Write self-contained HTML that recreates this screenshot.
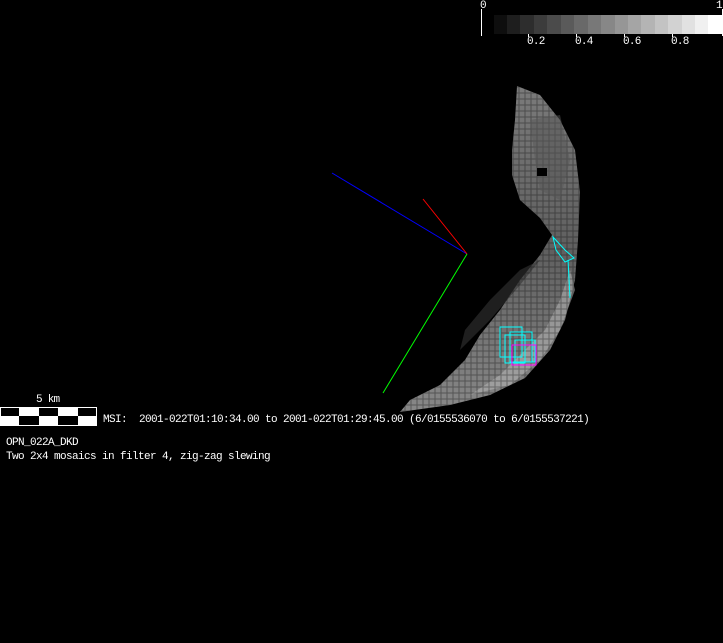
<!DOCTYPE html>
<html><head><style>
html,body{margin:0;padding:0;background:#000;width:723px;height:643px;overflow:hidden;position:relative}
.t{position:absolute;color:#fff;font-family:"Liberation Mono",monospace;font-size:11px;line-height:11px;white-space:pre;letter-spacing:-0.75px}
</style></head><body>
<svg width="723" height="643" style="position:absolute;left:0;top:0">
<defs>
<linearGradient id="g2" x1="0" y1="0" x2="0" y2="1">
<stop offset="0" stop-color="#999"/><stop offset="0.5" stop-color="#777"/><stop offset="1" stop-color="#aaa"/>
</linearGradient>
<pattern id="p" width="6" height="6" patternUnits="userSpaceOnUse">
<rect width="6" height="6" fill="none"/><path d="M0,3 L6,3 M3,0 L3,6" stroke="#000" stroke-width="1" opacity="0.35"/>
</pattern>
</defs>
<g shape-rendering="crispEdges">
<rect x="494" y="15" width="14" height="19" fill="#0e0e0e"/>
<rect x="507" y="15" width="14" height="19" fill="#1e1e1e"/>
<rect x="520" y="15" width="14" height="19" fill="#2d2d2d"/>
<rect x="534" y="15" width="14" height="19" fill="#3c3c3c"/>
<rect x="547" y="15" width="14" height="19" fill="#4b4b4b"/>
<rect x="561" y="15" width="14" height="19" fill="#5a5a5a"/>
<rect x="574" y="15" width="14" height="19" fill="#696969"/>
<rect x="588" y="15" width="14" height="19" fill="#787878"/>
<rect x="601" y="15" width="14" height="19" fill="#878787"/>
<rect x="615" y="15" width="14" height="19" fill="#969696"/>
<rect x="628" y="15" width="14" height="19" fill="#a5a5a5"/>
<rect x="641" y="15" width="14" height="19" fill="#b4b4b4"/>
<rect x="655" y="15" width="14" height="19" fill="#c3c3c3"/>
<rect x="668" y="15" width="14" height="19" fill="#d2d2d2"/>
<rect x="682" y="15" width="14" height="19" fill="#e1e1e1"/>
<rect x="695" y="15" width="14" height="19" fill="#f0f0f0"/>
<rect x="708" y="15" width="14" height="19" fill="#fff"/>
<rect x="481" y="9" width="1" height="27" fill="#fff"/>
<rect x="722" y="9" width="1" height="27" fill="#fff"/>
<rect x="528" y="34" width="1" height="3" fill="#fff"/>
<rect x="576" y="34" width="1" height="3" fill="#fff"/>
<rect x="624" y="34" width="1" height="3" fill="#fff"/>
<rect x="672" y="34" width="1" height="3" fill="#fff"/>
</g>
<path d="M517,86 L540,95 L560,120 L575,150 L580,192 L578,240 L575,280 L565,320 L550,350 L525,378 L490,395 L450,405 L400,412 L410,400 L440,385 L465,360 L480,335 L500,310 L520,280 L540,255 L552,235 L540,218 L520,200 L512,175 L512,150 L515,120 Z" fill="url(#g2)" opacity="0.8"/>
<path d="M470,395 L500,375 L525,350 L545,330 L560,300 L570,270 L575,290 L560,330 L540,360 L510,385 Z" fill="#bbb" opacity="0.5"/>
<path d="M460,350 L490,320 L520,285 L540,260 L520,270 L490,300 L465,330 Z" fill="#333" opacity="0.6"/>
<path d="M517,86 L540,95 L560,120 L575,150 L580,192 L578,240 L575,280 L565,320 L550,350 L525,378 L490,395 L450,405 L400,412 L410,400 L440,385 L465,360 L480,335 L500,310 L520,280 L540,255 L552,235 L540,218 L520,200 L512,175 L512,150 L515,120 Z" fill="url(#p)"/>
<path d="M530,120 L560,115 L570,160 L560,200 L540,190 L535,160 Z" fill="#555" opacity="0.5"/>
<rect x="537" y="168" width="10" height="8" fill="#000"/>
<line x1="467" y1="254" x2="332" y2="173" stroke="#0000ff" stroke-width="1"/>
<line x1="467" y1="254" x2="423" y2="199" stroke="#ff0000" stroke-width="1"/>
<line x1="467" y1="254" x2="383" y2="393" stroke="#00ff00" stroke-width="1"/>
<g fill="none" stroke="#00ffff" stroke-width="1">
<path d="M553,237 L565,250 L574,258 L565,262 L556,250 Z"/>
<path d="M568,260 L570,298"/>
<rect x="500" y="327" width="22" height="30"/>
<rect x="505" y="335" width="20" height="28"/>
<rect x="510" y="332" width="22" height="30"/>
<rect x="515" y="340" width="20" height="22"/>
</g>
<rect x="512" y="345" width="24" height="20" fill="none" stroke="#ff00ff" stroke-width="1"/>
<g shape-rendering="crispEdges">
<rect x="0" y="407" width="97" height="19" fill="#fff"/>
<rect x="1" y="408" width="18" height="8" fill="#000"/>
<rect x="39" y="408" width="19" height="8" fill="#000"/>
<rect x="78" y="408" width="18" height="8" fill="#000"/>
<rect x="19" y="416" width="20" height="9" fill="#000"/>
<rect x="58" y="416" width="20" height="9" fill="#000"/>
</g>
</svg>
<div class="t" style="left:480px;top:1px">0</div>
<div class="t" style="left:716px;top:1px">1</div>
<div class="t" style="left:527px;top:37px">0.2</div>
<div class="t" style="left:575px;top:37px">0.4</div>
<div class="t" style="left:623px;top:37px">0.6</div>
<div class="t" style="left:671px;top:37px">0.8</div>
<div class="t" style="left:36px;top:395px">5 km</div>
<div class="t" style="left:103px;top:415px;letter-spacing:-0.6px">MSI:  2001-022T01:10:34.00 to 2001-022T01:29:45.00 (6/0155536070 to 6/0155537221)</div>
<div class="t" style="left:6px;top:438px;letter-spacing:-0.6px">OPN_022A_DKD</div>
<div class="t" style="left:6px;top:452px;letter-spacing:-0.6px">Two 2x4 mosaics in filter 4, zig-zag slewing</div>
</body></html>
